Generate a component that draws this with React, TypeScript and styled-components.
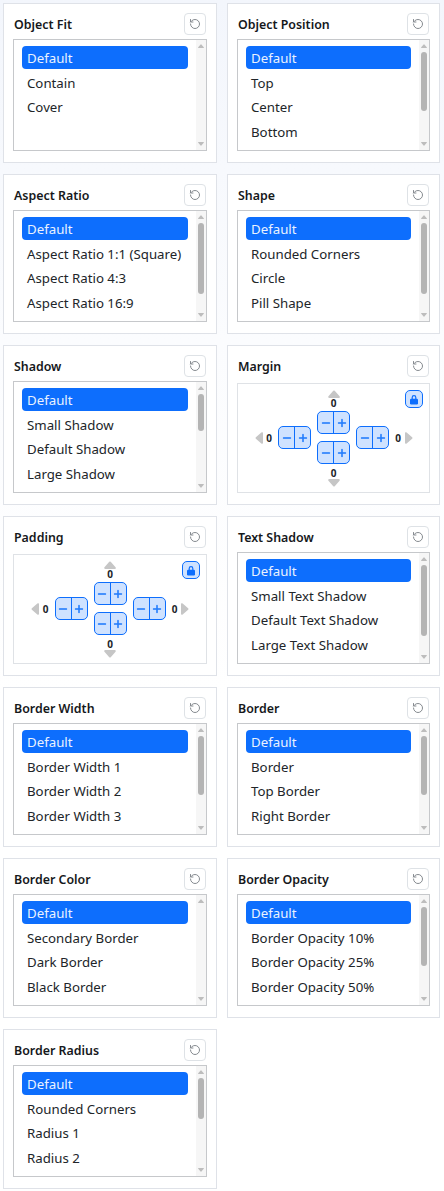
import React from "react";
import styled, { createGlobalStyle } from "styled-components";
import { RotateCcw } from "lucide-react";
import {
	BsCaretDownFill,
	BsCaretLeftFill,
	BsCaretRightFill,
	BsCaretUpFill,
	BsDash,
	BsPlus,
} from "react-icons/bs";

const GlobalStyle = createGlobalStyle`
	html, body {
		margin: 0;
		padding: 0;
		background: #fff;
	}
	body {
		font-family: "Noto Sans", "Open Sans", sans-serif;
		color: #212529;
	}
`;

const Page = styled.div`
	box-sizing: border-box;
	width: 444px;
	height: 1191px;
	padding: 3px 4px 0 3px;
	display: grid;
	grid-template-columns: 214px 213px;
	grid-auto-rows: 160px;
	column-gap: 10px;
	row-gap: 11px;
	background: linear-gradient(180deg, #f3f6fc 0, #fbfcfe 340px, #fff 700px);
`;

const Card = styled.section`
	box-sizing: border-box;
	background: #fff;
	border: 1px solid #dfe2e8;
	padding: 9px 10px 10px 9px;
	display: flex;
	flex-direction: column;
	gap: 4px;
`;

const CardHeader = styled.div`
	display: flex;
	align-items: center;
	justify-content: space-between;
	height: 22px;
`;

const Title = styled.h3`
	margin: 0 0 0 1px;
	font-size: 12.4px;
	font-weight: 600;
	color: #16181b;
`;

const ResetButton = styled.button`
	box-sizing: border-box;
	width: 22px;
	height: 22px;
	padding: 0;
	display: flex;
	align-items: center;
	justify-content: center;
	background: #fff;
	border: 1px solid #dee2e6;
	border-radius: 4px;
	color: #868b90;
`;

const ListBox = styled.div`
	box-sizing: border-box;
	height: 112px;
	margin-right: -1px;
	border: 1px solid #c6c8cb;
	display: flex;
	overflow: hidden;
`;

const Options = styled.ul`
	flex: 1;
	min-width: 0;
	margin: 0;
	padding: 6px 8px 0;
	list-style: none;
	display: flex;
	flex-direction: column;
	gap: 2px;
`;

const Option = styled.li<{ $selected?: boolean }>`
	flex: none;
	height: 22.7px;
	line-height: 24px;
	padding: 0 5px;
	border-radius: 4px;
	font-size: 13.25px;
	white-space: nowrap;
	color: ${(p) => (p.$selected ? "#eaf2ff" : "#212529")};
	background: ${(p) => (p.$selected ? "#0d6efd" : "transparent")};
`;

const Scrollbar = styled.div`
	flex: none;
	width: 10px;
	background: #f6f6f6;
	display: flex;
	flex-direction: column;
	align-items: center;
	color: #bdbdbd;
	font-size: 8px;
`;

const ScrollArrow = styled.div`
	flex: none;
	height: 12px;
	display: flex;
	align-items: center;
	justify-content: center;
`;

const ScrollTrack = styled.div`
	flex: 1;
	width: 100%;
`;

const ScrollThumb = styled.div<{ $height: number }>`
	width: 6px;
	margin: 0 auto;
	height: ${(p) => p.$height}px;
	border-radius: 3px;
	background: #b4b4b4;
`;

const SpacingBox = styled.div`
	box-sizing: border-box;
	position: relative;
	height: 110px;
	margin: 2px -1px 0 0;
	border: 1px solid #dfe2e6;
	display: flex;
	flex-direction: column;
	align-items: center;
	padding-top: 6px;
`;

const LockButton = styled.button`
	box-sizing: border-box;
	position: absolute;
	top: 6px;
	right: 6px;
	width: 18px;
	height: 18px;
	padding: 0;
	display: flex;
	align-items: center;
	justify-content: center;
	background: #cfe2ff;
	border: 1px solid #0d6efd;
	border-radius: 5px;
	color: #0d6efd;
`;

const Caret = styled.span<{ $side?: boolean }>`
	flex: none;
	display: flex;
	align-items: center;
	justify-content: center;
	width: ${(p) => (p.$side ? "7px" : "16px")};
	height: ${(p) => (p.$side ? "16px" : "7px")};
	color: #c6c6c6;
	font-size: 16px;
	line-height: 1;

	svg {
		flex: none;
	}
`;

const Value = styled.span`
	width: 6px;
	text-align: center;
	font-size: 10px;
	font-weight: 700;
	line-height: 12px;
	color: #212529;
`;

const VerticalEnd = styled.div`
	display: flex;
	flex-direction: column;
	align-items: center;
	height: 18px;
`;

const StepRow = styled.div`
	display: flex;
	align-items: center;
	gap: 6px;
	margin: 3px 0;
`;

const SideGroup = styled.div<{ $gap: number }>`
	display: flex;
	align-items: center;

	> :nth-child(1) {
		margin-right: ${(p) => p.$gap}px;
	}

	> :nth-child(2) {
		margin-right: ${(p) => 9 - p.$gap}px;
	}
`;

const CenterColumn = styled.div`
	display: flex;
	flex-direction: column;
	gap: 7px;
`;

const Stepper = styled.div`
	box-sizing: border-box;
	width: 33px;
	height: 23px;
	display: flex;
	background: #cfe2ff;
	border: 1px solid #0d6efd;
	border-radius: 5px;
	color: #0d6efd;
`;

const StepButton = styled.span`
	flex: 1 1 0;
	min-width: 0;
	display: flex;
	align-items: center;
	justify-content: center;
	font-size: 16px;

	& + & {
		border-left: 1px solid #0d6efd;
	}

	svg {
		flex: none;
		stroke: currentColor;
		stroke-width: 0.4px;
	}
`;

const LockIcon = () => (
	<svg width="10" height="11" viewBox="0 0 10 11" fill="currentColor">
		<path d="M2.6 5V3.4a2.4 2.4 0 0 1 4.8 0V5H6.2V3.4a1.2 1.2 0 0 0-2.4 0V5z" />
		<rect x="1" y="4.8" width="8" height="5.7" rx="1.2" />
	</svg>
);

const Step = () => (
	<Stepper>
		<StepButton>
			<BsDash />
		</StepButton>
		<StepButton>
			<BsPlus />
		</StepButton>
	</Stepper>
);

const SpacingControl = () => (
	<SpacingBox>
		<LockButton>
			<LockIcon />
		</LockButton>
		<VerticalEnd>
			<Caret>
				<BsCaretUpFill />
			</Caret>
			<Value>0</Value>
		</VerticalEnd>
		<StepRow>
			<SideGroup $gap={3}>
				<Caret $side>
					<BsCaretLeftFill />
				</Caret>
				<Value>0</Value>
				<Step />
			</SideGroup>
			<CenterColumn>
				<Step />
				<Step />
			</CenterColumn>
			<SideGroup $gap={6}>
				<Step />
				<Value>0</Value>
				<Caret $side>
					<BsCaretRightFill />
				</Caret>
			</SideGroup>
		</StepRow>
		<VerticalEnd>
			<Value>0</Value>
			<Caret>
				<BsCaretDownFill />
			</Caret>
		</VerticalEnd>
	</SpacingBox>
);

interface SettingListProps {
	options: string[];
	thumb?: number;
}

const SettingList: React.FC<SettingListProps> = ({ options, thumb }) => (
	<ListBox>
		<Options>
			{options.map((option, i) => (
				<Option key={option} $selected={i === 0}>
					{option}
				</Option>
			))}
		</Options>
		<Scrollbar>
			<ScrollArrow>
				<BsCaretUpFill />
			</ScrollArrow>
			<ScrollTrack>{thumb && <ScrollThumb $height={thumb} />}</ScrollTrack>
			<ScrollArrow>
				<BsCaretDownFill />
			</ScrollArrow>
		</Scrollbar>
	</ListBox>
);

const settings: { title: string; options?: string[]; thumb?: number }[] = [
	{ title: "Object Fit", options: ["Default", "Contain", "Cover"] },
	{ title: "Object Position", options: ["Default", "Top", "Center", "Bottom"], thumb: 59 },
	{
		title: "Aspect Ratio",
		options: ["Default", "Aspect Ratio 1:1 (Square)", "Aspect Ratio 4:3", "Aspect Ratio 16:9"],
		thumb: 71,
	},
	{ title: "Shape", options: ["Default", "Rounded Corners", "Circle", "Pill Shape"], thumb: 71 },
	{ title: "Shadow", options: ["Default", "Small Shadow", "Default Shadow", "Large Shadow"], thumb: 37 },
	{ title: "Margin" },
	{ title: "Padding" },
	{
		title: "Text Shadow",
		options: ["Default", "Small Text Shadow", "Default Text Shadow", "Large Text Shadow"],
		thumb: 71,
	},
	{
		title: "Border Width",
		options: ["Default", "Border Width 1", "Border Width 2", "Border Width 3"],
		thumb: 59,
	},
	{ title: "Border", options: ["Default", "Border", "Top Border", "Right Border"], thumb: 59 },
	{
		title: "Border Color",
		options: ["Default", "Secondary Border", "Dark Border", "Black Border"],
	},
	{
		title: "Border Opacity",
		options: ["Default", "Border Opacity 10%", "Border Opacity 25%", "Border Opacity 50%"],
		thumb: 59,
	},
	{
		title: "Border Radius",
		options: ["Default", "Rounded Corners", "Radius 1", "Radius 2"],
		thumb: 41,
	},
];

const App: React.FC = () => (
	<Page>
		<GlobalStyle />
		{settings.map((setting) => (
			<Card key={setting.title}>
				<CardHeader>
					<Title>{setting.title}</Title>
					<ResetButton>
						<RotateCcw size={12} strokeWidth={2} />
					</ResetButton>
				</CardHeader>
				{setting.options ? (
					<SettingList options={setting.options} thumb={setting.thumb} />
				) : (
					<SpacingControl />
				)}
			</Card>
		))}
	</Page>
);

export default App;
